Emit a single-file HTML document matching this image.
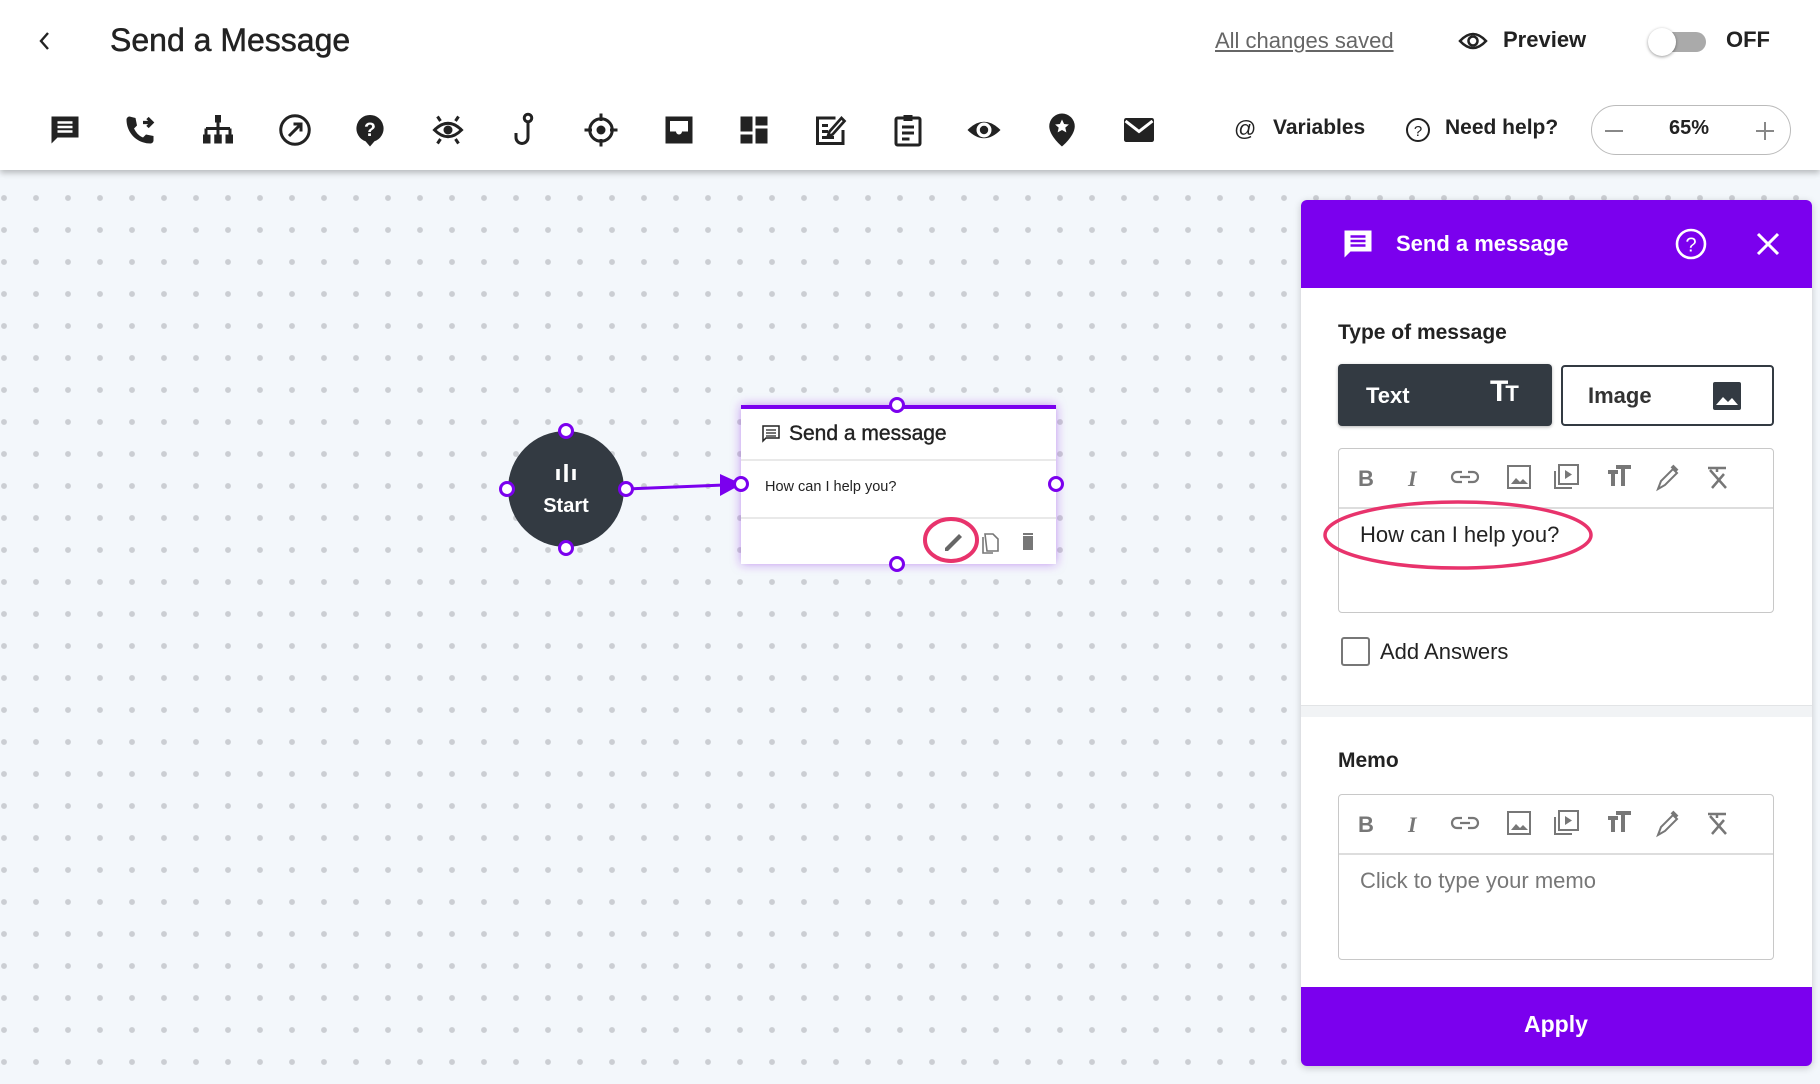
<!DOCTYPE html>
<html><head><meta charset="utf-8"><style>
*{box-sizing:border-box;margin:0;padding:0}
body{width:1820px;height:1084px;overflow:hidden;font-family:"Liberation Sans",Arial,sans-serif;background:#f3f7fb;position:relative;color:#222}
.abs{position:absolute}
#hdr{left:0;top:0;width:1820px;height:170px;background:#fff;box-shadow:0 3px 6px rgba(0,0,0,.25);z-index:5}
#canvas{left:0;top:170px;width:1820px;height:914px;background-color:#f3f7fb;background-image:radial-gradient(circle,#cbced3 2.6px,transparent 3.2px);background-size:32px 32px;background-position:-12px 12px}
.ti{position:absolute;top:112px;width:36px;height:36px;margin-left:-2px}
.t{position:absolute;white-space:nowrap}
</style></head><body>
<div id="canvas" class="abs"></div>
<div id="hdr" class="abs">
 <svg class="abs" style="left:36px;top:30px" width="18" height="22" viewBox="0 0 18 22"><path d="M12 3 L5 11 L12 19" stroke="#222" stroke-width="2.4" fill="none"/></svg>
 <div class="t" style="left:110px;top:22px;font-size:32px;color:#222;-webkit-text-stroke:0.5px #222">Send a Message</div>
 <div class="t" style="left:1215px;top:28px;font-size:22px;color:#666;text-decoration:underline">All changes saved</div>
 <svg class="abs" style="left:1458px;top:28px" width="30" height="26" viewBox="0 0 30 26"><path d="M2 13 Q15 -1 28 13 Q15 27 2 13Z" stroke="#222" stroke-width="2.5" fill="none"/><circle cx="15" cy="13" r="4.5" stroke="#222" stroke-width="2.5" fill="none"/></svg>
 <div class="t" style="left:1503px;top:27px;font-size:22px;font-weight:bold;color:#222">Preview</div>
 <div class="abs" style="left:1654px;top:32px;width:52px;height:20px;border-radius:10px;background:#aaa"></div>
 <div class="abs" style="left:1648px;top:28px;width:28px;height:28px;border-radius:50%;background:#fff;box-shadow:0 1px 3px rgba(0,0,0,.4)"></div>
 <div class="t" style="left:1726px;top:27px;font-size:22px;font-weight:bold;color:#222">OFF</div>

 <svg class="ti" style="left:49px" viewBox="0 0 24 24"><path d="M3 3h18v14H7l-4 4z" fill="#222"/><path d="M7 7h10M7 10h10M7 13h10" stroke="#fff" stroke-width="1.6"/></svg>
 <svg class="ti" style="left:124px" viewBox="0 0 24 24"><path d="M5 3c-1 0-2 1-2 2 0 9 7 16 16 16 1 0 2-1 2-2v-3l-5-1-2 2c-3-1-5-4-6-6l2-2-1-5z" fill="#222"/><path d="M14 7h6M17 4l3 3-3 3" stroke="#222" stroke-width="2.2" fill="none"/></svg>
 <svg class="ti" style="left:202px" viewBox="0 0 24 24"><rect x="10" y="2" width="4" height="5" fill="#222"/><path d="M12 7v4M4 11h16M4 11v4M12 11v4M20 11v4" stroke="#222" stroke-width="2" fill="none"/><rect x="2" y="15" width="5" height="6" fill="#222"/><rect x="9.5" y="15" width="5" height="6" fill="#222"/><rect x="17" y="15" width="5" height="6" fill="#222"/></svg>
 <svg class="ti" style="left:279px" viewBox="0 0 24 24"><circle cx="12" cy="12" r="9.5" stroke="#222" stroke-width="2" fill="none"/><path d="M8 16l7-7M11 8h5v5" stroke="#222" stroke-width="2" fill="none"/></svg>
 <svg class="ti" style="left:354px" viewBox="0 0 24 24"><path d="M12 2a9 9 0 0 0-3 17.5L12 23l3-3.5A9 9 0 0 0 12 2z" fill="#222"/><text x="12" y="16" text-anchor="middle" font-size="13" font-weight="bold" fill="#fff" font-family="Liberation Sans">?</text></svg>
 <svg class="ti" style="left:432px" viewBox="0 0 24 24"><path d="M3 12Q12 3 21 12Q12 21 3 12Z" stroke="#222" stroke-width="2" fill="none"/><circle cx="12" cy="12" r="3" fill="#222"/><path d="M5 3l2 3M19 3l-2 3M5 21l2-3M19 21l-2-3" stroke="#222" stroke-width="2"/></svg>
 <svg class="ti" style="left:509px" viewBox="0 0 24 24"><circle cx="14" cy="4" r="2.5" stroke="#222" stroke-width="2" fill="none"/><path d="M14 6.5V17a4 4 0 0 1-8 0v-3" stroke="#222" stroke-width="2" fill="none"/></svg>
 <svg class="ti" style="left:585px" viewBox="0 0 24 24"><circle cx="12" cy="12" r="7.5" stroke="#222" stroke-width="2" fill="none"/><circle cx="12" cy="12" r="3" fill="#222"/><path d="M12 1v5M12 18v5M1 12h5M18 12h5" stroke="#222" stroke-width="2"/></svg>
 <svg class="ti" style="left:663px" viewBox="0 0 24 24"><path d="M3 3h18v18H3z" fill="#222"/><path d="M6 6h12v7h-4a2 2 0 0 1-4 0H6z" fill="#fff"/></svg>
 <svg class="ti" style="left:738px" viewBox="0 0 24 24"><rect x="3" y="3" width="8" height="10" fill="#222"/><rect x="13" y="3" width="8" height="6" fill="#222"/><rect x="3" y="15" width="8" height="6" fill="#222"/><rect x="13" y="11" width="8" height="10" fill="#222"/></svg>
 <svg class="ti" style="left:815px" viewBox="0 0 24 24"><path d="M15 4H3v17h17v-9" stroke="#222" stroke-width="2" fill="none"/><path d="M6 9h4M6 13h4M6 17h8" stroke="#222" stroke-width="2"/><path d="M13 15l8-9-2-2-8 9-1 3z" stroke="#222" stroke-width="1.8" fill="none"/></svg>
 <svg class="ti" style="left:892px" viewBox="0 0 24 24"><rect x="4" y="4" width="16" height="18" rx="1" stroke="#222" stroke-width="2" fill="none"/><rect x="9" y="2" width="6" height="4" fill="#222"/><path d="M8 10h8M8 14h8M8 18h5" stroke="#222" stroke-width="2"/></svg>
 <svg class="ti" style="left:968px" viewBox="0 0 24 24"><path d="M1 12Q12 1 23 12Q12 23 1 12Z" fill="#222"/><circle cx="12" cy="12" r="5" fill="#fff"/><circle cx="12" cy="12" r="2.8" fill="#222"/></svg>
 <svg class="ti" style="left:1046px" viewBox="0 0 24 24"><path d="M12 1a8.5 8.5 0 0 0-8.5 8.5C3.5 16 12 23 12 23s8.5-7 8.5-13.5A8.5 8.5 0 0 0 12 1z" fill="#222"/><path d="M12 5l1.4 3 3.2.3-2.4 2.1.7 3.2L12 12l-2.9 1.6.7-3.2-2.4-2.1 3.2-.3z" fill="#fff"/></svg>
 <svg class="ti" style="left:1123px" viewBox="0 0 24 24"><rect x="2" y="4" width="20" height="16" rx="1.5" fill="#222"/><path d="M3 6l9 7 9-7" stroke="#fff" stroke-width="2" fill="none"/></svg>

 <div class="t" style="left:1234px;top:116px;font-size:22px;color:#222">@</div>
 <div class="t" style="left:1273px;top:116px;font-size:21px;font-weight:bold;color:#222">Variables</div>
 <svg class="abs" style="left:1405px;top:117px" width="26" height="26" viewBox="0 0 26 26"><circle cx="13" cy="13" r="11" stroke="#222" stroke-width="2" fill="none"/><text x="13" y="19" text-anchor="middle" font-size="15" fill="#222" font-family="Liberation Sans">?</text></svg>
 <div class="t" style="left:1445px;top:116px;font-size:21px;font-weight:bold;color:#222">Need help?</div>
 <div class="abs" style="left:1591px;top:105px;width:200px;height:50px;border:1.5px solid #bbb;border-radius:25px"></div>
 <div class="abs" style="left:1605px;top:130px;width:18px;height:2px;background:#888"></div>
 <div class="t" style="left:1669px;top:117px;font-size:20px;font-weight:bold;color:#222">65%</div>
 <div class="abs" style="left:1756px;top:130px;width:18px;height:2px;background:#888"></div>
 <div class="abs" style="left:1764px;top:122px;width:2px;height:18px;background:#888"></div>
</div>

<svg class="abs" style="left:0;top:0" width="1300" height="1084">
 <defs><filter id="gl" x="-20%" y="-20%" width="140%" height="140%"><feDropShadow dx="0" dy="0" stdDeviation="5" flood-color="#8a2be2" flood-opacity=".5"/></filter></defs>
 <circle cx="566" cy="489" r="58" fill="#333a42"/>
 <path d="M558 469v11M566 464v18M574 469v11" stroke="#fff" stroke-width="3.5"/>
 <text x="566" y="512" text-anchor="middle" font-size="20" font-weight="bold" fill="#fff" font-family="Liberation Sans">Start</text>
 <line x1="626" y1="489" x2="724" y2="485" stroke="#7b00ee" stroke-width="3"/>
 <path d="M720 474L742 484L720 496Z" fill="#7b00ee"/>
 <rect x="741" y="405" width="315" height="159" fill="#fff" filter="url(#gl)"/>
 <rect x="741" y="405" width="315" height="4" fill="#7b00ee"/>
 <line x1="741" y1="460" x2="1056" y2="460" stroke="#e2e2e2" stroke-width="1.5"/>
 <line x1="741" y1="518" x2="1056" y2="518" stroke="#e2e2e2" stroke-width="1.5"/>
 <path d="M763 426h16v12h-13l-3 3z" stroke="#222" stroke-width="1.5" fill="none"/><path d="M766 430h10M766 433h10M766 436h10" stroke="#222" stroke-width="1.2"/>
 <text x="789" y="440" font-size="21" fill="#222" font-family="Liberation Sans" stroke="#222" stroke-width="0.4">Send a message</text>
 <text x="765" y="491" font-size="14.5" fill="#222" font-family="Liberation Sans">How can I help you?</text>
 <path d="M945 548l14-14 3 3-14 14h-3z" fill="#666"/>
 <path d="M985 534h8l5 5v12h-11zM983 537v16h10" stroke="#777" stroke-width="1.6" fill="none"/>
 <path d="M1023 534h10M1024 537h8v12h-8z" stroke="#777" stroke-width="2" fill="#777"/>
 <ellipse cx="951" cy="540" rx="26" ry="21" stroke="#e8336c" stroke-width="4" fill="none"/>
 <g fill="#fff" stroke="#7b00ee" stroke-width="3">
  <circle cx="566" cy="431" r="6.5"/><circle cx="566" cy="548" r="6.5"/><circle cx="507" cy="489" r="6.5"/><circle cx="626" cy="489" r="6.5"/>
  <circle cx="897" cy="405" r="6.5"/><circle cx="897" cy="564" r="6.5"/><circle cx="741" cy="484" r="6.5"/><circle cx="1056" cy="484" r="6.5"/>
 </g>
</svg>

<div class="abs" style="left:1301px;top:200px;width:511px;height:866px;background:#fff;border-radius:6px;box-shadow:0 2px 8px rgba(0,0,0,.2);overflow:hidden">
 <div class="abs" style="left:0;top:0;width:511px;height:88px;background:#7b00ee"></div>
 <div class="abs" style="left:0;top:505px;width:511px;height:12px;background:#f1f3f5;border-top:1px solid #e2e4e6"></div>
 <div class="abs" style="left:0;top:787px;width:511px;height:79px;background:#7b00ee"></div>
</div>
<svg class="abs" style="left:1340px;top:226px" width="36" height="36" viewBox="0 0 24 24"><path d="M3 3h18v14H7l-4 4z" fill="#fff"/><path d="M7 7h10M7 10h10M7 13h10" stroke="#7b00ee" stroke-width="1.6"/></svg>
<div class="t" style="left:1396px;top:231px;font-size:22px;font-weight:bold;color:#fff">Send a message</div>
<svg class="abs" style="left:1674px;top:227px" width="34" height="34" viewBox="0 0 34 34"><circle cx="17" cy="17" r="14" stroke="#fff" stroke-width="2.6" fill="none"/><text x="17" y="24.5" text-anchor="middle" font-size="20" fill="#fff" font-family="Liberation Sans">?</text></svg>
<svg class="abs" style="left:1755px;top:231px" width="26" height="26" viewBox="0 0 26 26"><path d="M3 3L23 23M23 3L3 23" stroke="#fff" stroke-width="3"/></svg>

<div class="t" style="left:1338px;top:321px;font-size:21px;font-weight:bold;color:#222">Type of message</div>
<div class="abs" style="left:1338px;top:364px;width:214px;height:62px;background:#333a42;border-radius:4px;box-shadow:0 1px 3px rgba(0,0,0,.3)"></div>
<div class="t" style="left:1366px;top:383px;font-size:22px;font-weight:bold;color:#fff">Text</div>
<div class="t" style="left:1490px;top:375px;font-size:30px;font-weight:bold;color:#fff;letter-spacing:-3px">T<span style="font-size:22px">T</span></div>
<div class="abs" style="left:1561px;top:365px;width:213px;height:61px;border:2px solid #333a42;border-radius:4px;background:#fff"></div>
<div class="t" style="left:1588px;top:383px;font-size:22px;font-weight:bold;color:#333">Image</div>
<svg class="abs" style="left:1712px;top:381px" width="30" height="30" viewBox="0 0 30 30"><rect x="1" y="1" width="28" height="28" rx="2" fill="#333a42"/><path d="M4 24l7-8 5 5 4-4 6 7z" fill="#fff"/></svg>

<div class="abs" style="left:1338px;top:448px;width:436px;height:165px;border:1.5px solid #c8c8c8;border-radius:4px"></div>
<div class="abs" style="left:1339px;top:507px;width:434px;height:1.5px;background:#ddd"></div>
<div class="t" style="left:1360px;top:522px;font-size:22px;color:#222">How can I help you?</div>
<svg class="abs" style="left:1322px;top:499px" width="272" height="72"><ellipse cx="136" cy="36" rx="133" ry="33" stroke="#e8336c" stroke-width="3.5" fill="none"/></svg>
<div class="abs" style="left:1341px;top:637px;width:29px;height:29px;border:2.5px solid #777;border-radius:3px"></div>
<div class="t" style="left:1380px;top:639px;font-size:22px;color:#222">Add Answers</div>

<div class="t" style="left:1338px;top:749px;font-size:21px;font-weight:bold;color:#222">Memo</div>
<div class="abs" style="left:1338px;top:794px;width:436px;height:166px;border:1.5px solid #c8c8c8;border-radius:4px"></div>
<div class="abs" style="left:1339px;top:853px;width:434px;height:1.5px;background:#ddd"></div>
<div class="t" style="left:1360px;top:868px;font-size:22px;color:#777">Click to type your memo</div>
<div class="t" style="left:1524px;top:1011px;font-size:23px;font-weight:bold;color:#fff">Apply</div>

<svg class="abs" style="left:1350px;top:462px" width="400" height="30" viewBox="0 0 400 30">
 <g fill="#777" stroke="#777">
 <text x="8" y="24" font-size="22" font-weight="bold" stroke="none" font-family="Liberation Sans">B</text>
 <text x="58" y="24" font-size="22" font-weight="bold" font-style="italic" stroke="none" font-family="Liberation Serif">I</text>
 <path d="M110 15h10M112 10h-5a5 5 0 0 0 0 10h5M118 10h5a5 5 0 0 1 0 10h-5" stroke-width="2.2" fill="none"/>
 <rect x="158" y="4" width="22" height="22" stroke-width="2" fill="none"/><path d="M161 22l5-6 4 4 3-3 5 5z" stroke="none"/>
 <path d="M205 9v17h17" stroke-width="2" fill="none"/><rect x="209" y="3" width="19" height="19" stroke-width="2" fill="none"/><path d="M215 8v9l7-4.5z" stroke="none"/>
 <path d="M258 10h10M263 10v14M266 5h15M273 5v19" stroke-width="4" fill="none"/>
 <path d="M308 27l3-8 12-12 4 4-12 12z" stroke-width="2" fill="none"/><path d="M322 4l5 5" stroke-width="4"/>
 <path d="M358 6h18M367 6v4M360 8l16 18M362 26l12-14" stroke-width="2.5" fill="none"/>
 </g>
</svg>
<svg class="abs" style="left:1350px;top:808px" width="400" height="30" viewBox="0 0 400 30">
 <g fill="#777" stroke="#777">
 <text x="8" y="24" font-size="22" font-weight="bold" stroke="none" font-family="Liberation Sans">B</text>
 <text x="58" y="24" font-size="22" font-weight="bold" font-style="italic" stroke="none" font-family="Liberation Serif">I</text>
 <path d="M110 15h10M112 10h-5a5 5 0 0 0 0 10h5M118 10h5a5 5 0 0 1 0 10h-5" stroke-width="2.2" fill="none"/>
 <rect x="158" y="4" width="22" height="22" stroke-width="2" fill="none"/><path d="M161 22l5-6 4 4 3-3 5 5z" stroke="none"/>
 <path d="M205 9v17h17" stroke-width="2" fill="none"/><rect x="209" y="3" width="19" height="19" stroke-width="2" fill="none"/><path d="M215 8v9l7-4.5z" stroke="none"/>
 <path d="M258 10h10M263 10v14M266 5h15M273 5v19" stroke-width="4" fill="none"/>
 <path d="M308 27l3-8 12-12 4 4-12 12z" stroke-width="2" fill="none"/><path d="M322 4l5 5" stroke-width="4"/>
 <path d="M358 6h18M367 6v4M360 8l16 18M362 26l12-14" stroke-width="2.5" fill="none"/>
 </g>
</svg>
</body></html>
